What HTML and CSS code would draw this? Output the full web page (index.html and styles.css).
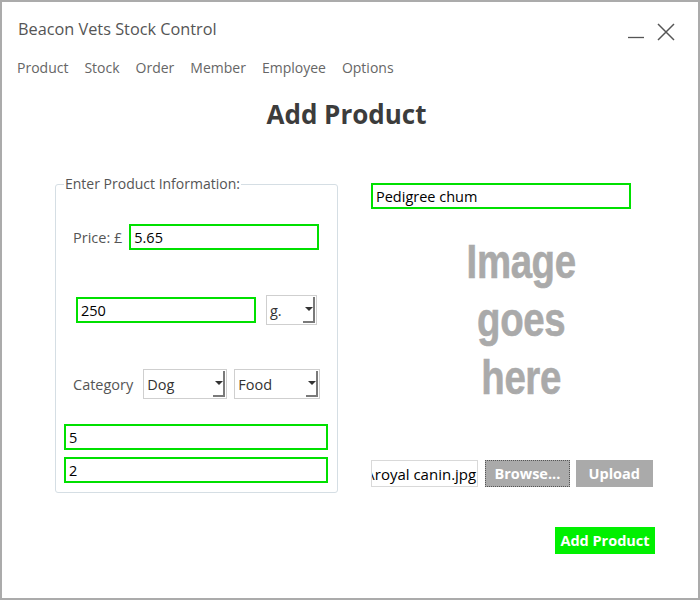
FILE: index.html
```html
<!DOCTYPE html>
<html>
<head>
<meta charset="utf-8">
<link rel="stylesheet" href="styles.css">
</head>
<body>
<div class="window">
  <header class="titlebar">
    <span class="title">Beacon Vets Stock Control</span>
    <div class="controls">
      <svg class="ctl" width="18" height="18" viewBox="0 0 18 18"><line x1="1" y1="14.5" x2="17" y2="14.5" stroke="#555" stroke-width="1.3"/></svg>
      <svg class="ctl" width="18" height="18" viewBox="0 0 18 18"><path d="M1 1 L17 17 M17 1 L1 17" stroke="#555" stroke-width="1.5" fill="none"/></svg>
    </div>
  </header>
  <nav class="menu">
    <span>Product</span><span>Stock</span><span>Order</span><span>Member</span><span>Employee</span><span>Options</span>
  </nav>
  <h1 class="heading">Add Product</h1>
  <div class="content">
    <fieldset class="group">
      <legend>Enter Product Information:</legend>
      <div class="row row-price">
        <span class="label">Price: £</span>
        <div class="field w-price">5.65</div>
      </div>
      <div class="row row-weight">
        <div class="field w-weight">250</div>
        <div class="select w-unit"><span>g.</span><span class="arrow"></span></div>
      </div>
      <div class="row row-cat">
        <span class="label">Category</span>
        <div class="select w-dog"><span>Dog</span><span class="arrow"></span></div>
        <div class="select w-food"><span>Food</span><span class="arrow"></span></div>
      </div>
      <div class="field w-full first">5</div>
      <div class="field w-full">2</div>
    </fieldset>
    <div class="right">
      <div class="field w-name">Pedigree chum</div>
      <div class="placeholder"><span class="ph-text">Image<br>goes<br>here</span></div>
      <div class="file-row">
        <div class="filebox"><span>\royal canin.jpg</span></div>
        <button class="btn browse">Browse...</button>
        <button class="btn upload">Upload</button>
      </div>
    </div>
  </div>
  <div class="footer">
    <button class="add">Add Product</button>
  </div>
</div>
</body>
</html>
```

FILE: styles.css
```css
* { box-sizing: border-box; }
html, body { margin: 0; padding: 0; background: #fff; }
body { font-family: "Open Sans", "Noto Sans", sans-serif; }

.window {
  width: 700px;
  height: 600px;
  border: 2px solid #ababab;
  background: #fff;
  display: flex;
  flex-direction: column;
}

.titlebar {
  display: flex;
  justify-content: space-between;
  align-items: center;
  height: 54px;
  padding: 0 23px 0 16px;
}
.title { font-size: 16.3px; color: #555; }
.controls { display: flex; gap: 12px; align-items: center; margin-top: 6px; }
.ctl { display: block; }

.menu {
  display: flex;
  gap: 16px;
  padding-left: 15px;
  height: 22px;
  align-items: center;
  font-size: 14px;
  color: #666;
}

.heading {
  margin: 0;
  text-align: center;
  font-size: 26px;
  font-weight: 700;
  color: #3c3c3c;
  height: 97px;
  line-height: 28px;
  padding-top: 22px;
  padding-right: 7px;
}

.content {
  display: flex;
  gap: 33px;
  padding-left: 53px;
  height: 320px;
}

.group {
  margin: 0;
  width: 283px;
  height: 318px;
  border: 1px solid #d5dee4;
  border-radius: 3px;
  padding: 0 9px 0 8px;
  display: flex;
  flex-direction: column;
}
.group legend {
  font-size: 14px;
  color: #555;
  padding: 0 1px;
  margin-left: 0;
  line-height: 18px;
}

.row { display: flex; align-items: center; }
.label { font-size: 14.5px; color: #555; }

.field {
  height: 26px;
  border: 2px solid #00e000;
  font-size: 14.5px;
  color: #000;
  padding-left: 3px;
  display: flex;
  align-items: center;
  background: #fff;
}

.row-price { margin-top: 31px; padding-left: 9px; gap: 7px; }
.w-price { width: 190px; }

.row-weight { margin-top: 45px; padding-left: 12px; gap: 10px; }
.w-weight { width: 180px; }

.select {
  height: 30px;
  border: 1px solid #cfcfcf;
  display: flex;
  align-items: center;
  justify-content: space-between;
  font-size: 14.5px;
  color: #333;
  padding-left: 3px;
}
.arrow {
  width: 12px;
  height: 26px;
  border-right: 2px solid #7a7a7a;
  border-bottom: 2px solid #7a7a7a;
  margin-right: 1px;
  position: relative;
  align-self: center;
}
.arrow::after {
  content: "";
  position: absolute;
  left: 2px;
  top: 10px;
  border-left: 4px solid transparent;
  border-right: 4px solid transparent;
  border-top: 4px solid #333;
}
.w-unit { width: 51px; }

.row-cat { margin-top: 44px; padding-left: 9px; gap: 7px; }
.row-cat .label { margin-right: 3px; }
.w-dog { width: 84px; }
.w-food { width: 86px; }

.w-full { width: 264px; margin-top: 7px; }
.w-full.first { margin-top: 25px; }

.right { display: flex; flex-direction: column; width: 282px; }
.w-name { width: 260px; margin-top: 8px; }

.placeholder {
  width: 300px;
  margin-top: 24px;
  height: 226px;
  display: flex;
  justify-content: center;
}
.ph-text {
  display: block;
  text-align: center;
  font-family: "Liberation Sans", Arial, sans-serif;
  font-weight: 700;
  font-size: 48px;
  line-height: 58px;
  color: #aaa;
  transform: scaleX(0.8);
  letter-spacing: -0.5px;
  -webkit-text-stroke: 0.6px #aaa;
}

.file-row { display: flex; gap: 7px; margin-top: 1px; }
.filebox {
  width: 108px;
  height: 27px;
  border: 1px solid #d9d9d9;
  display: flex;
  justify-content: flex-end;
  align-items: center;
  overflow: hidden;
  white-space: nowrap;
  font-size: 15px;
  color: #000;
  padding-right: 1px;
}
.btn {
  height: 27px;
  background: #aaa;
  color: #fff;
  font-family: inherit;
  font-weight: 700;
  font-size: 14.5px;
  padding: 0;
  margin: 0;
}
.browse { width: 85px; border: 1px dotted #555; }
.upload { width: 78px; border: none; margin-left: -1px; }

.footer {
  display: flex;
  justify-content: flex-end;
  padding-right: 43px;
  padding-top: 32px;
}
.add {
  width: 100px;
  height: 27px;
  background: #00f000;
  color: #fff;
  border: none;
  font-family: inherit;
  font-weight: 700;
  font-size: 14.5px;
  padding: 0;
}
```
